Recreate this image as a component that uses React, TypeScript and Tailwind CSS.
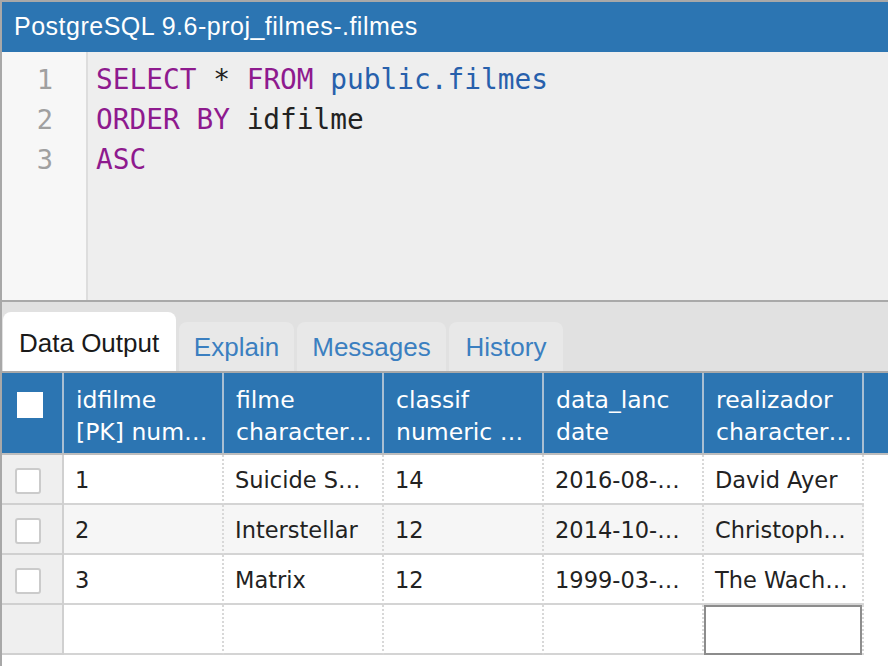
import React from 'react';

const mono = { fontFamily: '"DejaVu Sans Mono", "Liberation Mono", monospace' };
const dejavu = { fontFamily: '"DejaVu Sans", Verdana, sans-serif' };

const columns = [
  ['idfilme', '[PK] num…'],
  ['filme', 'character…'],
  ['classif', 'numeric …'],
  ['data_lanc', 'date'],
  ['realizador', 'character…'],
];

const rows = [
  ['1', 'Suicide S…', '14', '2016-08-…', 'David Ayer'],
  ['2', 'Interstellar', '12', '2014-10-…', 'Christoph…'],
  ['3', 'Matrix', '12', '1999-03-…', 'The Wach…'],
];

function Checkbox() {
  return <div className="w-[26px] h-[26px] bg-white border-2 border-[#cbcbcb] rounded-[3px]" />;
}

export default function App() {
  return (
    <div className="w-[888px] h-[666px] overflow-hidden bg-white border-l-2 border-t-2 border-[#a8a8a8] flex flex-col font-['Liberation_Sans',Arial,sans-serif]">
      {/* title bar */}
      <div className="h-[50px] shrink-0 bg-[#2c75b2] text-white text-[25px] tracking-[0.5px] flex items-center pl-[12px]">
        PostgreSQL 9.6-proj_filmes-.filmes
      </div>

      {/* query editor */}
      <div className="h-[248px] shrink-0 flex bg-[#eeeeee]" style={mono}>
        <div className="w-[86px] bg-[#f7f7f7] border-r-2 border-[#dddddd] pt-[8px] pr-[33px] text-right text-[#a0a0a0] text-[27px] leading-[40px]">
          <div>1</div>
          <div>2</div>
          <div>3</div>
        </div>
        <div className="pl-[8px] pt-[8px] text-[27.8px] leading-[40px] text-[#222] whitespace-pre">
          <div>
            <span className="text-[#8e1a8e]">SELECT</span> * <span className="text-[#8e1a8e]">FROM</span>{' '}
            <span className="text-[#2760ac]">public.filmes</span>
          </div>
          <div>
            <span className="text-[#8e1a8e]">ORDER BY</span> idfilme
          </div>
          <div>
            <span className="text-[#8e1a8e]">ASC</span>
          </div>
        </div>
      </div>

      {/* tabs */}
      <div className="h-[73px] shrink-0 bg-[#e1e1e1] border-t-2 border-b-2 border-[#a9a9a9] flex items-end gap-[3px] pl-px text-[26px]">
        <div className="w-[173px] h-[59px] bg-white rounded-t-[8px] flex items-center pl-[16px] pt-[4px] text-[#1a1a1a]">
          Data Output
        </div>
        <div className="w-[115px] h-[49px] bg-[#e8e8e8] rounded-t-[8px] flex items-center justify-center pt-[2px] text-[#3b7fc0]">
          Explain
        </div>
        <div className="w-[149px] h-[49px] bg-[#e8e8e8] rounded-t-[8px] flex items-center justify-center pt-[2px] text-[#3b7fc0]">
          Messages
        </div>
        <div className="w-[114px] h-[49px] bg-[#e8e8e8] rounded-t-[8px] flex items-center justify-center pt-[2px] text-[#3b7fc0]">
          History
        </div>
      </div>

      {/* grid header */}
      <div className="h-[82px] shrink-0 flex bg-[#2c75b2] border-b-2 border-[#bdbdbd] text-white text-[23.5px] leading-[32px]" style={dejavu}>
        <div className="w-[62px] shrink-0 border-r-2 border-[#a9bfd3] flex items-center pl-[15px] pb-[16px]">
          <div className="w-[26px] h-[26px] bg-white" />
        </div>
        {columns.map(([name, type]) => (
          <div key={name} className="w-[160px] shrink-0 border-r-2 border-[#a9bfd3] pl-[12px] pt-[11px] whitespace-nowrap overflow-hidden">
            <div>{name}</div>
            <div>{type}</div>
          </div>
        ))}
        <div className="flex-1" />
      </div>

      {/* grid body */}
      <div className="flex flex-col text-[22.5px] text-[#222]" style={dejavu}>
        {rows.map((r, i) => (
          <div key={r[0]} className="h-[50px] flex">
            <div className="w-[62px] shrink-0 bg-[#efefef] border-r-2 border-b-2 border-[#d0d0d0] flex items-center pl-[13px] pt-[4px]">
              <Checkbox />
            </div>
            {r.map((cell, j) => (
              <div
                key={j}
                className={`w-[160px] shrink-0 border-b-2 border-b-[#d4d4d4] border-r-2 border-r-[#d8d8d8] border-dotted flex items-center pl-[11px] pt-[4px] whitespace-nowrap overflow-hidden ${i === 1 ? 'bg-[#f6f6f6]' : 'bg-white'}`}
                style={{ borderBottomStyle: 'solid' }}
              >
                {cell}
              </div>
            ))}
          </div>
        ))}
        <div className="h-[50px] flex">
          <div className="w-[62px] shrink-0 bg-[#efefef] border-r-2 border-b-2 border-[#d0d0d0]" />
          {[0, 1, 2, 3].map((j) => (
            <div
              key={j}
              className="w-[160px] shrink-0 border-b-2 border-b-[#d4d4d4] border-r-2 border-r-[#d8d8d8] border-dotted"
              style={{ borderBottomStyle: 'solid' }}
            />
          ))}
          <div className="w-[160px] shrink-0 border-r-2 border-r-[#d8d8d8] border-dotted">
            <div className="h-full border-2 border-[#8c8c8c]" style={{ borderStyle: 'solid' }} />
          </div>
        </div>
      </div>
    </div>
  );
}
